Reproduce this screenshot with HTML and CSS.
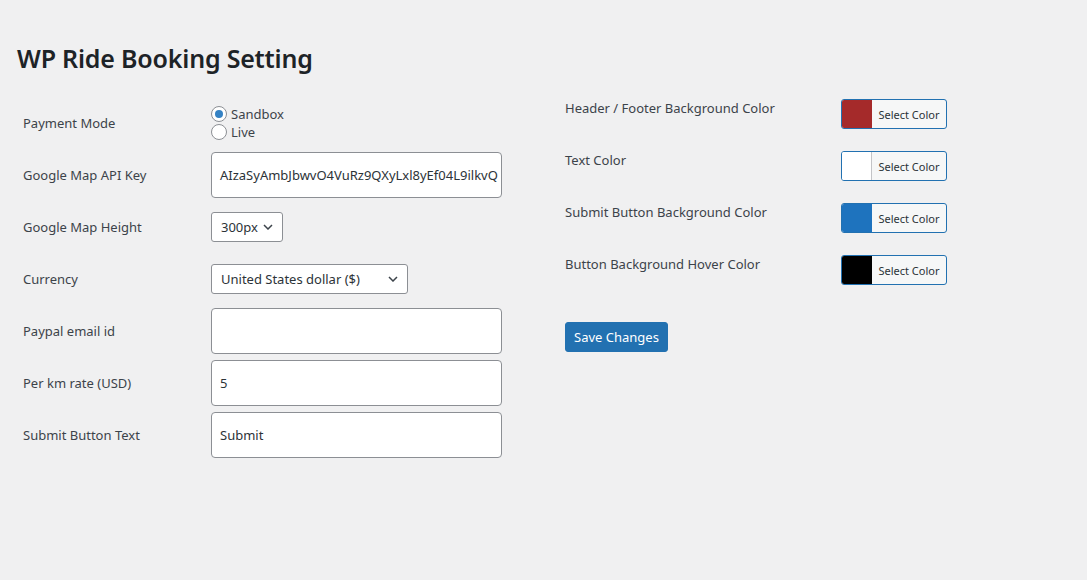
FILE: index.html
```html
<!DOCTYPE html>
<html lang="en">
<head>
<meta charset="utf-8">
<title>WP Ride Booking Setting</title>
<link rel="stylesheet" href="styles.css">
</head>
<body>
<div class="wrap">
  <h1 class="title">WP Ride Booking Setting</h1>
  <div class="columns">
    <div class="col-left">
      <div class="row">
        <div class="label">Payment Mode</div>
        <div class="field radios">
          <label class="radio"><span class="dot checked"></span>Sandbox</label>
          <label class="radio"><span class="dot"></span>Live</label>
        </div>
      </div>
      <div class="row">
        <div class="label">Google Map API Key</div>
        <div class="field"><div class="input">AIzaSyAmbJbwvO4VuRz9QXyLxl8yEf04L9ilkvQ</div></div>
      </div>
      <div class="row">
        <div class="label">Google Map Height</div>
        <div class="field"><div class="select small">300px<svg class="chev" width="10" height="6" viewBox="0 0 10 6"><path d="M1 1l4 4 4-4" fill="none" stroke="#3c434a" stroke-width="1.5"/></svg></div></div>
      </div>
      <div class="row">
        <div class="label">Currency</div>
        <div class="field"><div class="select wide">United States dollar ($)<svg class="chev" width="10" height="6" viewBox="0 0 10 6"><path d="M1 1l4 4 4-4" fill="none" stroke="#3c434a" stroke-width="1.5"/></svg></div></div>
      </div>
      <div class="row">
        <div class="label">Paypal email id</div>
        <div class="field"><div class="input"></div></div>
      </div>
      <div class="row">
        <div class="label">Per km rate (USD)</div>
        <div class="field"><div class="input">5</div></div>
      </div>
      <div class="row">
        <div class="label">Submit Button Text</div>
        <div class="field"><div class="input">Submit</div></div>
      </div>
    </div>
    <div class="col-right">
      <div class="crow">
        <div class="clabel">Header / Footer Background Color</div>
        <div class="cbtn"><span class="swatch red"></span><span class="ctext">Select Color</span></div>
      </div>
      <div class="crow">
        <div class="clabel">Text Color</div>
        <div class="cbtn"><span class="swatch white"></span><span class="ctext">Select Color</span></div>
      </div>
      <div class="crow">
        <div class="clabel">Submit Button Background Color</div>
        <div class="cbtn"><span class="swatch blue"></span><span class="ctext">Select Color</span></div>
      </div>
      <div class="crow">
        <div class="clabel">Button Background Hover Color</div>
        <div class="cbtn"><span class="swatch black"></span><span class="ctext">Select Color</span></div>
      </div>
      <button class="save">Save Changes</button>
    </div>
  </div>
</div>
</body>
</html>
```

FILE: styles.css
```css
* { box-sizing: border-box; }
html, body { margin: 0; padding: 0; }
body {
  background: #f0f0f1;
  color: #3c434a;
  font-family: "Noto Sans", "Open Sans", sans-serif;
  font-size: 13px;
  width: 1087px;
  height: 580px;
  overflow: hidden;
}
.wrap { padding: 40px 0 0 17px; }
.title {
  margin: 0;
  font-size: 25px;
  font-weight: 600;
  color: #1d2327;
  line-height: 36px;
  letter-spacing: -0.2px;
}
.columns { display: flex; margin-top: 21px; }
.col-left { width: 548px; padding-left: 6px; }
.row { display: flex; align-items: center; height: 52px; }
.label { width: 188px; color: #3c434a; font-size: 13px; }
.field { flex: 0 0 auto; }
.radios { display: flex; flex-direction: column; }
.radio { display: flex; align-items: center; height: 18px; font-size: 13px; color: #3c434a; }
.dot {
  width: 16px; height: 16px;
  border: 1px solid #8c8f94;
  border-radius: 50%;
  background: #fff;
  margin-right: 4px;
  position: relative;
}
.dot.checked::after {
  content: "";
  position: absolute;
  left: 3px; top: 3px;
  width: 8px; height: 8px;
  border-radius: 50%;
  background: #3582c4;
}
.input {
  width: 291px;
  height: 46px;
  background: #fff;
  border: 1px solid #8c8f94;
  border-radius: 4px;
  padding: 0 8px;
  display: flex;
  align-items: center;
  font-size: 13px;
  color: #2c3338;
  white-space: nowrap;
  overflow: hidden;
}
.select {
  height: 30px;
  background: #fff;
  border: 1px solid #8c8f94;
  border-radius: 3px;
  padding: 0 9px 0 9px;
  display: flex;
  align-items: center;
  justify-content: space-between;
  font-size: 13px;
  color: #2c3338;
}
.select.small { width: 72px; }
.select.wide { width: 197px; }
.chev { margin-left: 4px; }
.col-right { padding-top: 2px; }
.crow { display: flex; align-items: flex-start; height: 52px; }
.clabel { width: 276px; color: #3c434a; font-size: 13px; line-height: 18px; }
.cbtn {
  display: flex;
  height: 30px;
  width: 106px;
  border: 1px solid #2271b1;
  border-radius: 3px;
  overflow: hidden;
  background: #f6f7f7;
}
.swatch { width: 30px; height: 100%; border-right: 1px solid #c3c4c7; }
.swatch.red { background: #a52a2a; border-right-color: #a52a2a; }
.swatch.white { background: #fff; }
.swatch.blue { background: #1e73be; border-right-color: #1e73be; }
.swatch.black { background: #000; border-right-color: #000; }
.ctext { flex: 1; display: flex; align-items: center; justify-content: center; font-size: 11px; color: #2c3338; }
.save {
  margin-top: 15px;
  height: 30px;
  padding: 0 8px;
  background: #2271b1;
  border: 1px solid #2271b1;
  border-radius: 3px;
  color: #fff;
  font-family: inherit;
  font-size: 13px;
}
```
